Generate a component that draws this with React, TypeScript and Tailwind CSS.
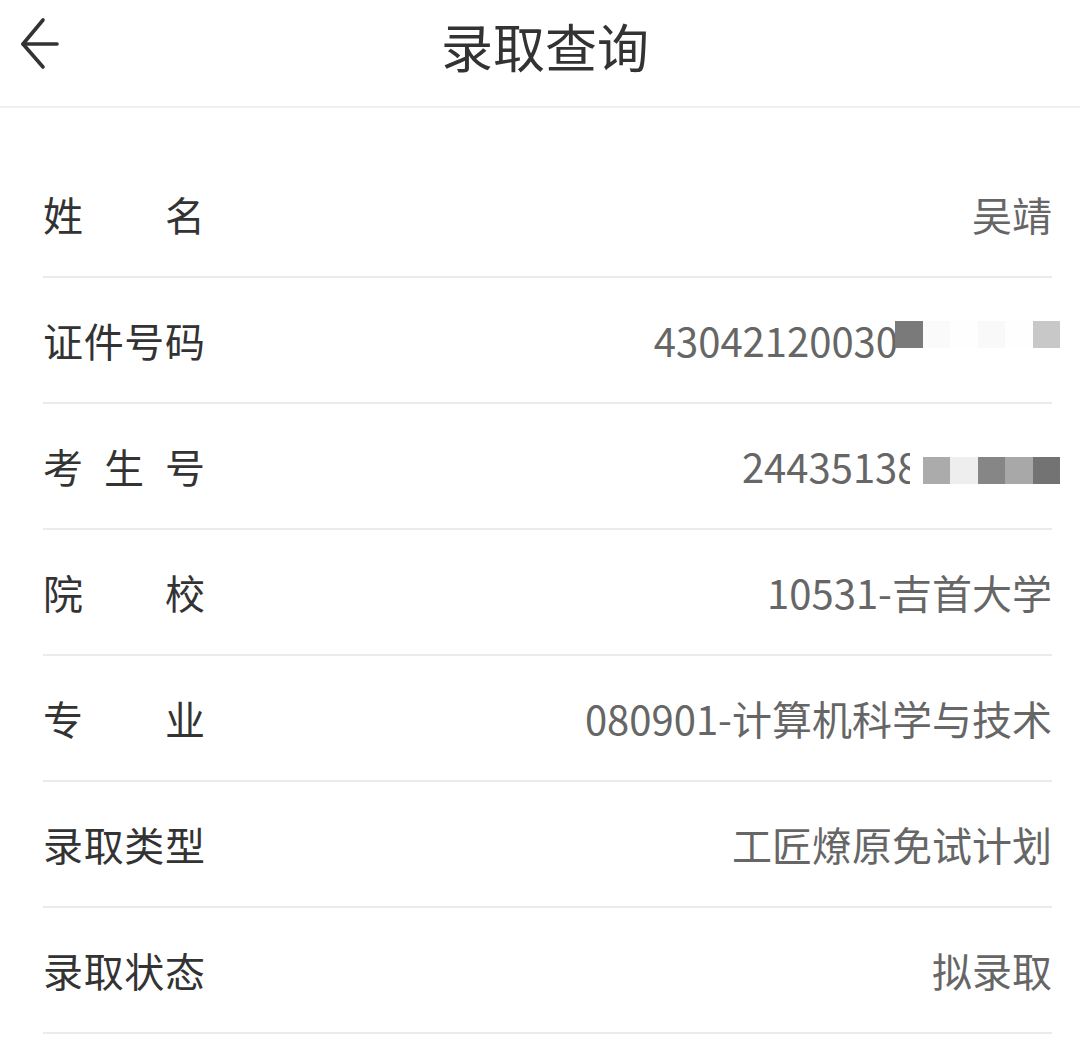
import React from 'react';

type Block = { color: string; size: string };
type Row = {
  label: string[];
  value: string;
  mask?: { blocks: Block[]; place: string };
};

const sq = 'w-[27.5px] h-[27px]';

const rows: Row[] = [
  { label: ['姓', '名'], value: '吴靖' },
  {
    label: ['证', '件', '号', '码'],
    value: '43042120030',
    mask: {
      blocks: [
        { color: '#7a7a7a', size: sq },
        { color: '#fafafa', size: sq },
        { color: '#fefefe', size: sq },
        { color: '#f9f9f9', size: sq },
        { color: '#fefefe', size: sq },
        { color: '#c8c8c8', size: sq },
      ],
      place: 'ml-[-3px] -translate-y-[6px]',
    },
  },
  {
    label: ['考', '生', '号'],
    value: '24435138',
    mask: {
      blocks: [
        { color: '#ffffff', size: 'w-[13px] h-[46px]' },
        { color: '#ababab', size: sq },
        { color: '#eeeeee', size: sq },
        { color: '#868686', size: sq },
        { color: '#a8a8a8', size: sq },
        { color: '#737373', size: sq },
      ],
      place: 'ml-[-10px] items-center translate-y-[4px]',
    },
  },
  { label: ['院', '校'], value: '10531-吉首大学' },
  { label: ['专', '业'], value: '080901-计算机科学与技术' },
  { label: ['录', '取', '类', '型'], value: '工匠燎原免试计划' },
  { label: ['录', '取', '状', '态'], value: '拟录取' },
];

const BackArrow = () => (
  <svg width="44" height="56" viewBox="0 0 44 56" fill="none" stroke="#333" strokeWidth="3.6" strokeLinecap="round" strokeLinejoin="round">
    <path d="M23 4 L3 28 L23 51" />
    <path d="M3 28 H37" />
  </svg>
);

export default function App() {
  return (
    <div className="w-[1080px] h-[1052px] bg-white overflow-hidden font-['Noto_Sans_CJK_SC','Noto_Sans',sans-serif]">
      <header className="relative h-[108px] flex items-center justify-center border-b-2 border-[#efefef]">
        <button className="absolute left-[20px] top-[16px]" aria-label="返回">
          <BackArrow />
        </button>
        <h1 className="text-[52px] leading-none text-[#333] ml-[10px] mb-[14px]">录取查询</h1>
      </header>

      <div className="pt-[44px] pl-[43px] pr-[28px]">
        {rows.map((r, i) => (
          <div key={i} className="h-[126px] flex items-center justify-between border-b-2 border-[#ebebeb]">
            <div className="w-[162px] flex justify-between text-[40px] leading-none text-[#333]">
              {r.label.map((c, j) => (
                <span key={j}>{c}</span>
              ))}
            </div>
            {r.mask ? (
              <div className="flex items-center mr-[-8px]">
                <span className="text-[40px] leading-none text-[#666]">{r.value}</span>
                <div className={`flex ${r.mask.place}`}>
                  {r.mask.blocks.map((b, k) => (
                    <span key={k} className={b.size} style={{ backgroundColor: b.color }} />
                  ))}
                </div>
              </div>
            ) : (
              <span className="text-[40px] leading-none text-[#666]">{r.value}</span>
            )}
          </div>
        ))}
      </div>
    </div>
  );
}
